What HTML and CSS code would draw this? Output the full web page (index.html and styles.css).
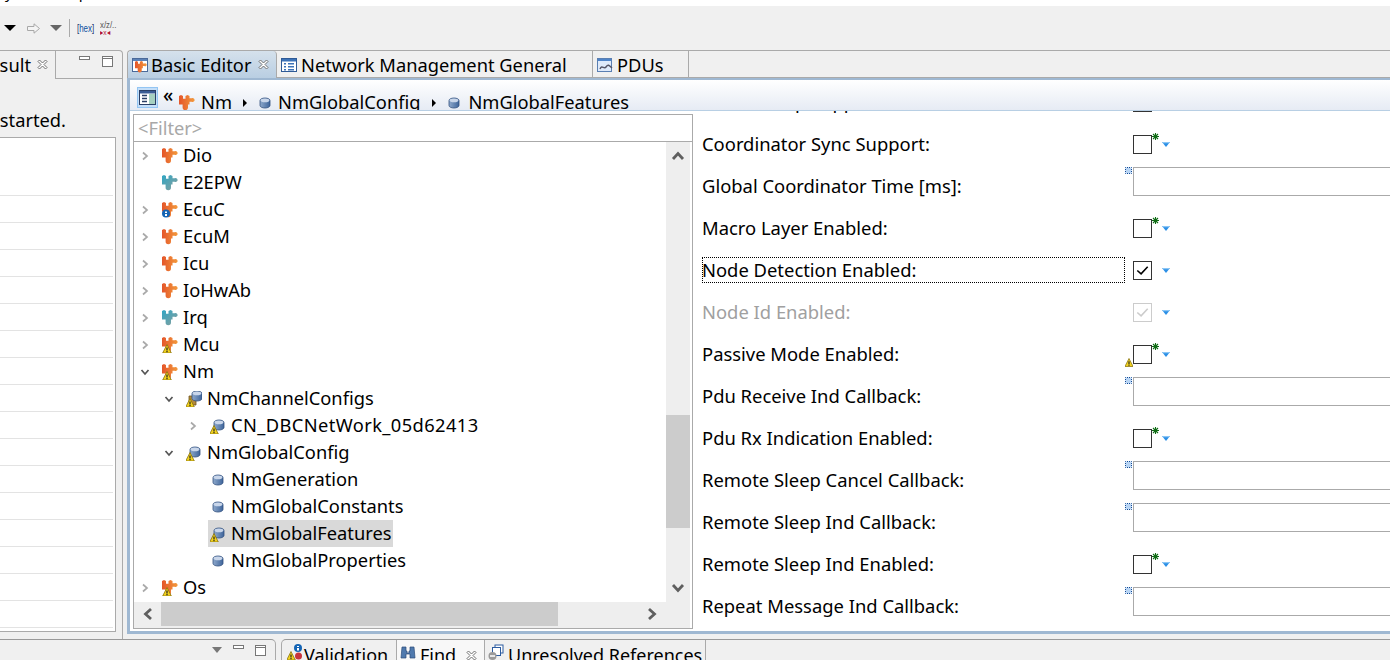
FILE: index.html
```html
<!DOCTYPE html>
<html lang="en">
  <head>
    <meta charset="UTF-8" />
    <title>Basic Editor</title>
    <link rel="stylesheet" href="styles.css">
  </head>
  <body>
    <svg class="defs" width="0" height="0">
      <defs>
        <linearGradient id="orange" x1="0" x2="1" y1="0" y2="0">
          <stop offset="0" stop-color="#e4552a" />
          <stop offset="1" stop-color="#f39a3c" />
        </linearGradient>
        <linearGradient id="teal" x1="0" x2="1" y1="0" y2="1">
          <stop offset="0" stop-color="#2fa6c4" />
          <stop offset="1" stop-color="#8a9f9c" />
        </linearGradient>
        <linearGradient id="can" x1="0" x2="1" y1="0" y2="0">
          <stop offset="0" stop-color="#8ea9cc" />
          <stop offset="1" stop-color="#3f659b" />
        </linearGradient>
        <path id="piece" d="M0 1 2 0 4 1V3.800H6.500V1L8.500 0 10.500 1V3.300h2a2 2 0 1 1 0 3.400h-2V9.500H9v3a2.700 2.700 0 0 1-5.400 0v-3H0z" />
        <g id="cyl">
          <path d="M3 5.500c0-1.400 2.200-2.500 5-2.500s5 1.100 5 2.500v5c0 1.400-2.200 2.500-5 2.500s-5-1.100-5-2.500z" fill="url(#can)" stroke="#34527f" stroke-width=".8" />
          <ellipse cx="8" cy="5.400" rx="4.300" ry="1.800" fill="#c9d6ea" />
        </g>
        <g id="warn">
          <path d="M4 7.500 8.300 16H-.3z" fill="#f2d21c" stroke="#8a7410" stroke-width=".8" />
          <path d="M3.400 10.500h1.200v3h-1.200z M3.400 14h1.200v1.200h-1.200z" fill="#222" />
        </g>
      </defs>
      <symbol id="i-orange" viewBox="0 0 16 16"><use href="#piece" fill="url(#orange)" /></symbol>
      <symbol id="i-teal" viewBox="0 0 16 16"><use href="#piece" fill="url(#teal)" /></symbol>
      <symbol id="i-orange-warn" viewBox="0 0 16 16"><use href="#piece" fill="url(#orange)" /><use href="#warn" x="1" /></symbol>
      <symbol id="i-orange-info" viewBox="0 0 16 16">
        <use href="#piece" fill="url(#orange)" />
        <circle cx="4" cy="11.500" r="4" fill="#1565b5" />
        <path d="M3 9.500h2v1.500h-2z M3 12h2v2h-2z" fill="#fff" />
      </symbol>
      <symbol id="i-db" viewBox="0 0 16 16"><use href="#cyl" /></symbol>
      <symbol id="i-db-warn" viewBox="0 0 16 16"><use href="#cyl" x="1" y="-1" /><use href="#warn" /></symbol>
      <symbol id="i-dbs-warn" viewBox="0 0 16 16">
        <path d="M3 5h7v9H3z" fill="#b48a3c" stroke="#6e5420" stroke-width=".8" />
        <use href="#cyl" x="3" y="-3" />
        <use href="#warn" />
      </symbol>
      <symbol id="i-close" viewBox="0 0 11 11">
        <path d="M1 2.500 2.500 1 5.500 4 8.500 1 10 2.500 7 5.500 10 8.500 8.500 10 5.500 7 2.500 10 1 8.500 4 5.500z" fill="#fff" stroke="#6f6f6f" />
      </symbol>
      <symbol id="i-min" viewBox="0 0 11 11"><rect x=".5" y=".5" width="10" height="3" fill="#fff" stroke="#777" /></symbol>
      <symbol id="i-max" viewBox="0 0 11 11">
        <rect x=".5" y=".5" width="10" height="10" fill="#fff" stroke="#777" />
        <path d="M0 2.500h11" stroke="#777" />
      </symbol>
      <symbol id="i-right" viewBox="0 0 10 10"><path d="M3 1.500 7 5 3 8.500" fill="none" stroke="#a9a9a9" stroke-width="1.700" /></symbol>
      <symbol id="i-down" viewBox="0 0 10 10"><path d="M1.500 3 5 7 8.500 3" fill="none" stroke="#555" stroke-width="1.700" /></symbol>
      <symbol id="i-arrow" viewBox="0 0 14 14"><path d="M2 10 7 4.500 12 10M2 7" fill="none" stroke="#5f5f5f" stroke-width="2.800" /></symbol>
      <symbol id="i-deco" viewBox="0 0 7 7">
        <rect x=".5" y=".5" width="6" height="6" fill="#b7d4f4" stroke="#114a96" stroke-dasharray="1 1" stroke-dashoffset=".5" />
      </symbol>
      <symbol id="i-star" viewBox="0 0 7 7">
        <path d="M3.500 0v7M0 3.500h7M1 1l5 5M6 1 1 6" stroke="#0f6b14" stroke-width="1.100" />
      </symbol>
      <symbol id="i-menu" viewBox="0 0 8 5"><path d="M0 0h8L4 5z" fill="#2b8fe6" /><path d="M0 0h8L7 1.200H1z" fill="#8cc6f5" /></symbol>
      <symbol id="i-check" viewBox="0 0 18 18"><path d="M3.500 9 7.500 12.500 14.500 5" fill="none" stroke="currentColor" stroke-width="1.700" /></symbol>
    </svg>

    <div class="menubar"><span class="menu-y">y</span><span class="menu-p">p</span></div>

    <div class="toolbar">
      <span class="tri"></span>
      <svg class="tb-arrow" viewBox="0 0 13 11" width="13" height="11"><path d="M.5 3.500H7V.8l5.500 4.700L7 10.200V7.500H.5z" fill="#f4f4f4" stroke="#a8a8a8" /></svg>
      <span class="tri tri-gray"></span>
      <span class="tb-sep"></span>
      <span class="tb-hex"><b>[</b>hex<b>]</b></span>
      <span class="tb-xz"><span>x/z/..</span><span class="tb-xz-red">▸x◂</span></span>
    </div>

    <div class="main">
      <div class="left-view">
        <div class="left-tabs">
          <div class="left-tab">
            <span class="clip-text">Result</span>
            <svg class="ic-close"><use href="#i-close" /></svg>
          </div>
          <div class="view-btns">
            <svg class="ic-small"><use href="#i-min" /></svg>
            <svg class="ic-small"><use href="#i-max" /></svg>
          </div>
        </div>
        <div class="status"><span>Search not started.</span></div>
        <div class="result-box"><div class="result-rows"></div></div>
      </div>

      <div class="editor">
        <div class="editor-tabs">
          <div class="tab tab-active">
            <svg class="tab-ic" viewBox="0 0 16 16">
              <rect x=".5" y="1.500" width="15" height="13" fill="#fff" stroke="#4a6a9a" />
              <path d="M1 2h14v2H1z" fill="#5b82b8" />
              <use href="#i-orange" x="3" y="4" width="12" height="12" />
            </svg>
            Basic Editor
            <svg class="ic-close"><use href="#i-close" /></svg>
          </div>
          <div class="tab tab-network">
            <svg class="tab-ic" viewBox="0 0 16 16">
              <rect x=".5" y="1.500" width="15" height="13" fill="#fff" stroke="#2f5a96" />
              <path d="M1 2h14v2.500H1z" fill="#3d73b8" />
              <path d="M3 6h2v1.500H3zM7 6h6v1.500H7zM3 9h2v1.500H3zM7 9h6v1.500H7zM3 12h2v1.500H3zM7 12h6v1.500H7z" fill="#3d73b8" />
            </svg>
            Network Management General
          </div>
          <div class="tab tab-pdus">
            <svg class="tab-ic" viewBox="0 0 16 16">
              <rect x=".5" y="1.500" width="14" height="13" fill="#dfeafa" stroke="#5a7fb2" />
              <path d="M1 2h13v2H1z" fill="#4f84c8" />
              <path d="M3 12c2-5 4 1 6-2s3-2 6 1" fill="none" stroke="#556" stroke-width="1.400" />
            </svg>
            PDUs
          </div>
        </div>

        <div class="editor-body">
          <div class="crumbs">
            <span class="crumb-toggle">
              <svg viewBox="0 0 17 15" width="17" height="15">
                <rect x=".5" y=".5" width="16" height="14" fill="#fff" stroke="#2a3f66" />
                <path d="M1 1h15v2.500H1z" fill="#3a5c94" />
                <path d="M10 4h6v10h-6z" fill="#a6d0c0" />
                <path d="M3 5.500h5M3 8.500h5M3 11.500h5" stroke="#2a3f66" stroke-width="1.300" />
              </svg>
            </span>
            <span class="crumb-back">«</span>
            <svg class="crumb-ic"><use href="#i-orange" /></svg>
            <span class="crumb-nm">Nm</span>
            <span class="crumb-sep"></span>
            <svg class="crumb-ic"><use href="#i-db" /></svg>
            <span class="crumb-cfg">NmGlobalConfig</span>
            <span class="crumb-sep"></span>
            <svg class="crumb-ic"><use href="#i-db" /></svg>
            <span class="crumb-last">NmGlobalFeatures</span>
          </div>

          <div class="panes">
            <div class="tree-pane">
              <div class="tree-frame">
                <div class="filter">&lt;Filter&gt;</div>
                <div class="tree-grid">
                  <div class="tree">
                    <div class="row"><svg class="chev"><use href="#i-right" /></svg><svg class="ic"><use href="#i-orange" /></svg>Dio</div>
                    <div class="row"><span class="chev"></span><svg class="ic"><use href="#i-teal" /></svg>E2EPW</div>
                    <div class="row"><svg class="chev"><use href="#i-right" /></svg><svg class="ic"><use href="#i-orange-info" /></svg>EcuC</div>
                    <div class="row"><svg class="chev"><use href="#i-right" /></svg><svg class="ic"><use href="#i-orange" /></svg>EcuM</div>
                    <div class="row"><svg class="chev"><use href="#i-right" /></svg><svg class="ic"><use href="#i-orange" /></svg>Icu</div>
                    <div class="row"><svg class="chev"><use href="#i-right" /></svg><svg class="ic"><use href="#i-orange" /></svg>IoHwAb</div>
                    <div class="row"><svg class="chev"><use href="#i-right" /></svg><svg class="ic"><use href="#i-teal" /></svg>Irq</div>
                    <div class="row"><svg class="chev"><use href="#i-right" /></svg><svg class="ic"><use href="#i-orange-warn" /></svg>Mcu</div>
                    <div class="row"><svg class="chev"><use href="#i-down" /></svg><svg class="ic"><use href="#i-orange-warn" /></svg>Nm</div>
                    <div class="row d1"><svg class="chev"><use href="#i-down" /></svg><svg class="ic"><use href="#i-dbs-warn" /></svg>NmChannelConfigs</div>
                    <div class="row d2 wide"><svg class="chev"><use href="#i-right" /></svg><svg class="ic"><use href="#i-db-warn" /></svg>CN_DBCNetWork_05d62413</div>
                    <div class="row d1"><svg class="chev"><use href="#i-down" /></svg><svg class="ic"><use href="#i-db-warn" /></svg>NmGlobalConfig</div>
                    <div class="row d2"><span class="chev"></span><svg class="ic"><use href="#i-db" /></svg>NmGeneration</div>
                    <div class="row d2"><span class="chev"></span><svg class="ic"><use href="#i-db" /></svg>NmGlobalConstants</div>
                    <div class="row d2"><span class="chev"></span><span class="selected"><svg class="ic"><use href="#i-db-warn" /></svg>NmGlobalFeatures</span></div>
                    <div class="row d2"><span class="chev"></span><svg class="ic"><use href="#i-db" /></svg>NmGlobalProperties</div>
                    <div class="row"><svg class="chev"><use href="#i-right" /></svg><svg class="ic"><use href="#i-orange-warn" /></svg>Os</div>
                  </div>
                  <div class="vscroll">
                    <svg class="sb-arrow"><use href="#i-arrow" /></svg>
                    <div class="vtrack"><div class="vthumb"></div></div>
                    <svg class="sb-arrow flip"><use href="#i-arrow" /></svg>
                  </div>
                  <div class="hscroll">
                    <svg class="sb-arrow left"><use href="#i-arrow" /></svg>
                    <div class="htrack"><div class="hthumb"></div></div>
                    <svg class="sb-arrow right"><use href="#i-arrow" /></svg>
                  </div>
                  <div class="corner"></div>
                </div>
              </div>
            </div>

            <div class="form">
              <div class="frow first"><label>Car Wakeup Support:</label><span></span><span class="cb"></span></div>
              <div class="frow"><label>Coordinator Sync Support:</label><span></span><span class="cb"><svg class="star"><use href="#i-star" /></svg><svg class="cb-menu"><use href="#i-menu" /></svg></span></div>
              <div class="frow"><label>Global Coordinator Time [ms]:</label><svg class="deco"><use href="#i-deco" /></svg><span class="field"></span></div>
              <div class="frow"><label>Macro Layer Enabled:</label><span></span><span class="cb"><svg class="star"><use href="#i-star" /></svg><svg class="cb-menu"><use href="#i-menu" /></svg></span></div>
              <div class="frow"><label class="focused">Node Detection Enabled:</label><span></span><span class="cb"><svg class="tick"><use href="#i-check" /></svg><svg class="cb-menu"><use href="#i-menu" /></svg></span></div>
              <div class="frow"><label class="off">Node Id Enabled:</label><span></span><span class="cb cb-off"><svg class="tick"><use href="#i-check" /></svg><svg class="cb-menu"><use href="#i-menu" /></svg></span></div>
              <div class="frow"><label>Passive Mode Enabled:</label><svg class="warn-mark" viewBox="0 7 8 9.500"><use href="#warn" /></svg><span class="cb"><svg class="star"><use href="#i-star" /></svg><svg class="cb-menu"><use href="#i-menu" /></svg></span></div>
              <div class="frow"><label>Pdu Receive Ind Callback:</label><svg class="deco"><use href="#i-deco" /></svg><span class="field"></span></div>
              <div class="frow"><label>Pdu Rx Indication Enabled:</label><span></span><span class="cb"><svg class="star"><use href="#i-star" /></svg><svg class="cb-menu"><use href="#i-menu" /></svg></span></div>
              <div class="frow"><label>Remote Sleep Cancel Callback:</label><svg class="deco"><use href="#i-deco" /></svg><span class="field"></span></div>
              <div class="frow"><label>Remote Sleep Ind Callback:</label><svg class="deco"><use href="#i-deco" /></svg><span class="field"></span></div>
              <div class="frow"><label>Remote Sleep Ind Enabled:</label><span></span><span class="cb"><svg class="star"><use href="#i-star" /></svg><svg class="cb-menu"><use href="#i-menu" /></svg></span></div>
              <div class="frow"><label>Repeat Message Ind Callback:</label><svg class="deco"><use href="#i-deco" /></svg><span class="field"></span></div>
            </div>
          </div>
        </div>
      </div>
    </div>

    <div class="bottom">
      <div class="bottom-left">
        <span class="view-menu"></span>
        <svg class="ic-small"><use href="#i-min" /></svg>
        <svg class="ic-small"><use href="#i-max" /></svg>
      </div>
      <div class="bottom-right">
        <div class="btab btab-validation">
          <svg class="tab-ic" viewBox="0 0 16 16">
            <use href="#warn" />
            <circle cx="11" cy="4" r="4" fill="#1565b5" />
            <circle cx="11.500" cy="12" r="3.500" fill="#c8343c" />
            <path d="M10 2h2v1h-2zM10 4h2v2.500h-2z" fill="#fff" />
          </svg>
          Validation
        </div>
        <div class="btab btab-find">
          <svg class="tab-ic" viewBox="0 0 16 16">
            <path d="M2 3h4v4h1v2h2V7h1V3h4l1 11H10V10H6v4H1z" fill="#4f79ad" stroke="#2b4a78" stroke-width=".7" />
          </svg>
          Find
          <svg class="ic-close"><use href="#i-close" /></svg>
        </div>
        <div class="btab btab-unres">
          <svg class="tab-ic" viewBox="0 0 16 16">
            <rect x="7" y="1" width="8" height="8" fill="#fff" stroke="#2b5ba0" />
            <rect x="4.500" y="3.500" width="8" height="8" fill="#fff" stroke="#2b5ba0" />
            <circle cx="4.500" cy="12" r="4" fill="#9a9a9a" />
            <path d="M2 11.300h5v1.500H2z" fill="#fff" />
          </svg>
          Unresolved References
        </div>
      </div>
    </div>
  </body>
</html>
```

FILE: styles.css
```css
* {
  box-sizing: border-box;
}
body {
  margin: 0;
  width: 1390px;
  height: 660px;
  overflow: hidden;
  background-color: #f0f0f0;
  color: #000;
  font-family: "Noto Sans", sans-serif;
  font-size: 18.3px;
  white-space: nowrap;
}
svg {
  flex: none;
  display: block;
}
.defs {
  position: absolute;
}

/* top strip, only descenders of the menu are visible */
.menubar {
  height: 6px;
  background: #fff;
  overflow: hidden;
  display: flex;
  font-size: 15px;
  line-height: 6px;
  align-items: flex-end;
}
.menu-y {
  margin: -10px 0 0 5px;
  transform: translateY(-11px);
}
.menu-p {
  margin-left: 66px;
  transform: translateY(-11px);
}

.toolbar {
  height: 44px;
  display: flex;
  align-items: center;
  padding-left: 4px;
}
.tri {
  width: 0;
  height: 0;
  border-left: 6px solid transparent;
  border-right: 6px solid transparent;
  border-top: 6px solid #000;
}
.tri-gray {
  border-top-color: #666;
  margin-left: 10px;
}
.tb-arrow {
  margin-left: 11px;
}
.tb-sep {
  width: 1px;
  height: 18px;
  background: #aaa;
  margin: 0 7px;
}
.tb-hex {
  width: 17px;
  font-family: "Liberation Sans", sans-serif;
  font-size: 11px;
  color: #0d4f9e;
  transform: scaleX(0.72);
  transform-origin: left center;
}
.tb-hex b {
  color: #16306b;
  font-weight: 400;
}
.tb-xz {
  margin-left: 6px;
  width: 18px;
  display: flex;
  flex-direction: column;
  font-family: "Liberation Sans", sans-serif;
  font-size: 9.5px;
  line-height: 9px;
  color: #555;
  transform: scaleX(0.82);
  transform-origin: left center;
}
.tb-xz-red {
  color: #b01030;
  font-size: 8px;
  line-height: 7px;
}

.main {
  height: 589px;
  display: flex;
}

/* left view, clipped by the window edge */
.left-view {
  width: 123px;
  flex: none;
  border-right: 1px solid #aaa;
  border-top: 1px solid #aaa;
  border-top-right-radius: 4px;
  display: flex;
  flex-direction: column;
}
.left-tabs {
  height: 28px;
  flex: none;
  display: flex;
}
.left-tab {
  width: 56px;
  flex: none;
  display: flex;
  align-items: center;
  justify-content: flex-end;
  overflow: hidden;
  border-right: 1px solid #aaa;
  padding: 0 7px 2px 0;
  gap: 6px;
}
.clip-text {
  flex: none;
}
.view-btns {
  flex: 1;
  display: flex;
  gap: 12px;
  padding: 5px 0 0 23px;
  border-bottom: 1px solid #aaa;
}
.status {
  height: 58px;
  flex: none;
  display: flex;
  justify-content: flex-end;
  padding: 28px 55px 0 0;
  width: 121px;
}
.status span {
  flex: none;
}
.result-box {
  width: 116px;
  height: 495px;
  flex: none;
  background: #fff;
  border: 1px solid #aaa;
  border-left: 0;
  padding-top: 31px;
}
.result-rows {
  height: 100%;
  margin-right: 2px;
  background: repeating-linear-gradient(to bottom, #fff 0 26px, #e3e3e3 26px 27px);
}
.ic-close {
  width: 11px;
  height: 11px;
}
.ic-small {
  width: 11px;
  height: 11px;
}

/* editor */
.editor {
  flex: 1;
  min-width: 0;
  height: 584px;
  margin-left: 4px;
  display: flex;
  flex-direction: column;
}
.editor-tabs {
  height: 28px;
  flex: none;
  display: flex;
  border: 1px solid #aaa;
  border-width: 1px 0 0 1px;
  border-top-left-radius: 4px;
}
.tab {
  display: flex;
  align-items: center;
  height: 100%;
  border-right: 1px solid #aaa;
  border-bottom: 1px solid #aaa;
}
.tab-ic {
  width: 16px;
  height: 16px;
}
.tab-active {
  width: 149px;
  padding: 0 6px 0 4px;
  gap: 3px;
  background: linear-gradient(to bottom, #d5e1ec, #b9cee2);
  border-bottom: 0;
  border-top-left-radius: 4px;
  border-top-right-radius: 4px;
}
.tab-active .ic-close {
  margin-left: 4px;
}
.tab-network {
  width: 316px;
  padding: 1px 0 0 4px;
  gap: 4px;
}
.tab-pdus {
  width: 96px;
  padding: 1px 0 0 4px;
  gap: 4px;
}
.editor-tabs::after {
  content: "";
  flex: 1;
  border-bottom: 1px solid #aaa;
}
.editor-body {
  flex: 1;
  min-height: 0;
  display: flex;
  flex-direction: column;
  border-left: 3px solid #9fb8d2;
  border-top: 2px solid #9fb8d2;
  border-bottom: 3px solid #9fb8d2;
}
.crumbs {
  height: 31px;
  flex: none;
  overflow: hidden;
  display: flex;
  align-items: flex-start;
  padding: 7px 0 0 7px;
  background: linear-gradient(to bottom, #fff, #e6ebf4);
  border-bottom: 1px solid #b8cfe4;
}
.crumb-toggle {
  width: 21px;
  height: 21px;
  flex: none;
  display: flex;
  align-items: center;
  justify-content: center;
  background: #c4def8;
  border: 1px solid #93c5f3;
}
.crumb-back {
  width: 11px;
  margin-left: 5px;
  line-height: 17px;
  font-size: 19px;
  font-weight: 500;
}
.crumb-ic {
  width: 16px;
  height: 16px;
  margin-top: 8px;
}
.crumb-back + .crumb-ic {
  margin-left: 5px;
}
.crumb-nm,
.crumb-cfg,
.crumb-last {
  line-height: 30px;
  margin-left: 6px;
}
.crumb-cfg {
  margin-left: 5px;
}
.crumb-sep {
  width: 0;
  height: 0;
  border-left: 4px solid #000;
  border-top: 4px solid transparent;
  border-bottom: 4px solid transparent;
  margin: 12px 10px 0 11px;
}
.crumb-cfg + .crumb-sep {
  margin-left: 12px;
}
.panes {
  flex: 1;
  min-height: 0;
  display: flex;
  background: #fff;
}
.tree-pane {
  width: 563px;
  flex: none;
  padding: 3px 0 0 3px;
}
.tree-frame {
  width: 560px;
  height: 515px;
  border: 1px solid #aaa;
  display: flex;
  flex-direction: column;
}
.filter {
  height: 27px;
  flex: none;
  padding-left: 4px;
  color: #a8a8a8;
  line-height: 25px;
  border-bottom: 1px solid #aaa;
}
.tree-grid {
  flex: 1;
  min-height: 0;
  display: grid;
  grid-template-columns: 532px 26px;
  grid-template-rows: 460px 1fr;
}
.tree {
  overflow: hidden;
}
.row {
  height: 27px;
  display: flex;
  align-items: center;
  padding: 0 0 2px 6px;
  line-height: 25px;
}
.row.d1 {
  padding-left: 30px;
}
.row.d2 {
  padding-left: 54px;
}
.row.wide {
  letter-spacing: 0.4px;
}
.chev {
  width: 10px;
  height: 10px;
  flex: none;
  margin: 2px 12px 0 0;
}
.ic {
  width: 16px;
  height: 16px;
  margin: 2px 5px 0 0;
}
.selected {
  display: flex;
  align-items: center;
  align-self: flex-start;
  height: 27px;
  margin-left: -2px;
  padding: 0 1px 2px 2px;
  background: #d9d9d9;
}
.vscroll {
  background: #eee;
  width: 24px;
  display: flex;
  flex-direction: column;
}
.vtrack {
  flex: 1;
  position: relative;
}
.vthumb {
  position: absolute;
  top: 245px;
  left: 0;
  width: 24px;
  height: 113px;
  background: #ccc;
}
.sb-arrow {
  width: 14px;
  height: 14px;
  margin: 7px 5px;
}
.sb-arrow.flip {
  transform: rotate(180deg);
}
.sb-arrow.left {
  transform: rotate(-90deg);
}
.sb-arrow.right {
  transform: rotate(90deg);
}
.hscroll {
  background: #eee;
  display: flex;
  align-items: flex-start;
  height: 26px;
}
.hscroll .sb-arrow {
  margin: 5px 7px;
}
.htrack {
  flex: 1;
  position: relative;
  height: 24px;
}
.hthumb {
  position: absolute;
  left: -1px;
  top: 0;
  width: 397px;
  height: 24px;
  background: #ccc;
}
.corner {
  background: #eee;
  width: 24px;
  height: 26px;
}

/* form */
.form {
  flex: 1;
  min-width: 0;
  overflow: hidden;
  padding-left: 9px;
  font-size: 18.4px;
}
.frow {
  height: 42px;
  display: grid;
  grid-template-columns: 423px 8px 1fr;
  align-items: center;
}
.frow.first {
  margin-top: -30px;
}
.frow label {
  height: 26px;
  line-height: 25px;
}
.frow label.focused {
  outline: 1px dotted #000;
  outline-offset: -1px;
}
.frow label.off {
  color: #a0a0a0;
}
.cb {
  width: 19px;
  height: 19px;
  border: 1px solid #333;
  background: #fff;
  position: relative;
}
.cb-off {
  border-color: #ccc;
  color: #ccc;
}
.tick {
  width: 17px;
  height: 17px;
}
.star {
  position: absolute;
  left: 18px;
  top: -3px;
  width: 7px;
  height: 7px;
}
.cb-menu {
  position: absolute;
  left: 28px;
  top: 6px;
  width: 8px;
  height: 5px;
}
.deco {
  width: 7px;
  height: 7px;
  align-self: start;
  margin-top: 2px;
}
.warn-mark {
  width: 8px;
  height: 9px;
  align-self: end;
  margin-bottom: 8px;
}
.field {
  height: 29px;
  align-self: start;
  margin: 2px -2px 0 0;
  border: 1px solid #aaa;
  background: #fff;
}

/* bottom views */
.bottom {
  height: 21px;
  display: flex;
  gap: 5px;
}
.bottom-left {
  width: 276px;
  flex: none;
  display: flex;
  align-items: center;
  gap: 11px;
  padding-left: 233px;
  border-top: 1px solid #999;
  border-right: 1px solid #aaa;
  border-top-right-radius: 5px;
}
.view-menu {
  width: 0;
  height: 0;
  border-left: 5px solid transparent;
  border-right: 5px solid transparent;
  border-top: 6px solid #777;
  margin-left: -21px;
}
.bottom-right {
  flex: 1;
  display: flex;
  padding-left: 2px;
  border-top: 1px solid #999;
  border-left: 1px solid #aaa;
  border-top-left-radius: 5px;
  overflow: hidden;
  font-size: 18px;
}
.btab {
  height: 30px;
  display: flex;
  align-items: center;
  padding: 0 0 0 3px;
  gap: 4px;
  border-right: 1px solid #aaa;
}
.btab .tab-ic {
  margin-top: -6px;
}
.btab-validation {
  width: 113px;
  gap: 1px;
}
.btab-find {
  width: 88px;
  background: #f8f8f8;
}
.btab-find .ic-close {
  margin-left: 6px;
}
.btab-unres {
  width: 221px;
}
```
